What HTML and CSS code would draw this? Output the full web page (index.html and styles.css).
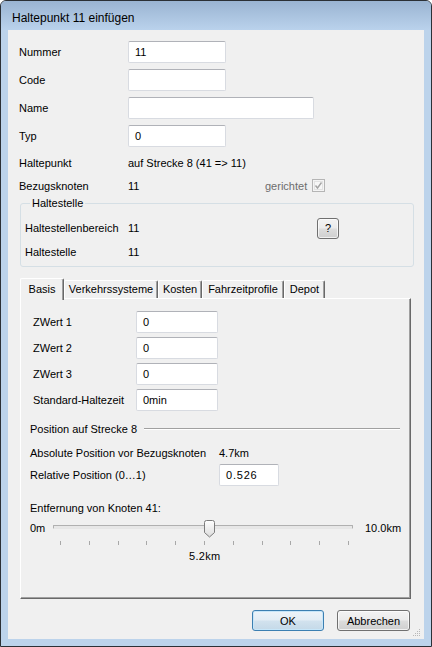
FILE: index.html
```html
<!DOCTYPE html>
<html lang="de">
<head>
<meta charset="utf-8">
<title>Haltepunkt 11 einfügen</title>
<link rel="stylesheet" href="styles.css">
</head>
<body>
<div class="window">
  <div class="titlebar"><span class="title">Haltepunkt 11 einfügen</span></div>
  <div class="client">
    <div class="row in"><span class="lbl">Nummer</span><div class="input w98">11</div></div>
    <div class="row in"><span class="lbl">Code</span><div class="input w98"></div></div>
    <div class="row in"><span class="lbl">Name</span><div class="input w186"></div></div>
    <div class="row in typ"><span class="lbl">Typ</span><div class="input w98">0</div></div>
    <div class="row txt"><span class="lbl">Haltepunkt</span><span>auf Strecke 8 (41 =&gt; 11)</span></div>
    <div class="row txt"><span class="lbl">Bezugsknoten</span><span class="val137">11</span><span class="disabled">gerichtet</span>
      <svg class="check" width="13" height="13" viewBox="0 0 13 13"><rect x="0.5" y="0.5" width="12" height="12" fill="#f4f4f4" stroke="#b5b5b5"/><rect x="2.5" y="2.5" width="8" height="8" fill="#f7f7f7" stroke="#e2e2e2"/><path d="M3.5 6.5 L5.5 9 L9.5 3.5" fill="none" stroke="#a4a4a4" stroke-width="1.4"/></svg>
    </div>
    <fieldset class="group">
      <legend>Haltestelle</legend>
      <div class="grow"><span class="glbl">Haltestellenbereich</span><span class="gval">11</span><div class="btn qbtn">?</div></div>
      <div class="grow"><span class="glbl">Haltestelle</span><span class="gval">11</span></div>
    </fieldset>
    <div class="tabs">
      <div class="tab sel t1">Basis</div>
      <div class="tab t2">Verkehrssysteme</div>
      <div class="tab t3">Kosten</div>
      <div class="tab t4">Fahrzeitprofile</div>
      <div class="tab t5">Depot</div>
    </div>
    <div class="panel">
      <div class="prow"><span class="plbl">ZWert 1</span><div class="input w82">0</div></div>
      <div class="prow"><span class="plbl">ZWert 2</span><div class="input w82">0</div></div>
      <div class="prow"><span class="plbl">ZWert 3</span><div class="input w82">0</div></div>
      <div class="prow"><span class="plbl">Standard-Haltezeit</span><div class="input w82">0min</div></div>
      <div class="section"><span>Position auf Strecke 8</span><div class="sepline"></div></div>
      <div class="srow abs"><span class="slbl">Absolute Position vor Bezugsknoten</span><span>4.7km</span></div>
      <div class="srow"><span class="slbl">Relative Position (0…1)</span><div class="input w60 num">0.526</div></div>
      <div class="srow ent"><span>Entfernung von Knoten 41:</span></div>
      <div class="slider">
        <span class="smin">0m</span>
        <div class="trackwrap">
          <div class="track"></div>
          <svg class="thumb" width="11" height="18" viewBox="0 0 11 18">
            <defs><linearGradient id="tg" x1="0" y1="0" x2="0" y2="1"><stop offset="0" stop-color="#ffffff"/><stop offset="1" stop-color="#dcdcdc"/></linearGradient></defs>
            <path d="M0.5 2.5 Q0.5 0.5 2.5 0.5 H8.5 Q10.5 0.5 10.5 2.5 V12.5 L5.5 17 L0.5 12.5 Z" fill="url(#tg)" stroke="#7c7c7c"/>
          </svg>
        </div>
        <span class="smax">10.0km</span>
      </div>
      <div class="ticks"></div>
      <div class="cur">5.2km</div>
    </div>
    <div class="buttons">
      <div class="btn default">OK</div>
      <div class="btn cancel">Abbrechen</div>
    </div>
    <svg class="grip" width="8" height="8" viewBox="0 0 8 8">
      <g fill="#b8b8b8"><rect x="6" y="0" width="1" height="1"/><rect x="4" y="2" width="1" height="1"/><rect x="6" y="2" width="1" height="1"/><rect x="2" y="4" width="1" height="1"/><rect x="4" y="4" width="1" height="1"/><rect x="6" y="4" width="1" height="1"/><rect x="0" y="6" width="1" height="1"/><rect x="2" y="6" width="1" height="1"/><rect x="4" y="6" width="1" height="1"/><rect x="6" y="6" width="1" height="1"/></g>
    </svg>
  </div>
</div>
</body>
</html>
```
FILE: styles.css
```css
* { box-sizing: border-box; }
html, body { margin: 0; padding: 0; }
body {
  width: 432px;
  height: 647px;
  overflow: hidden;
  background: #ffffff;
  font-family: "Liberation Sans", Arial, sans-serif;
  font-size: 11px;
  color: #000;
}
.window {
  width: 432px;
  height: 647px;
  border: 1px solid #2b3036;
  border-radius: 6px 6px 0 0;
  background: #bcd3eb;
  display: flex;
  flex-direction: column;
}
.titlebar {
  flex: none;
  height: 29px;
  border-radius: 5px 5px 0 0;
  background: linear-gradient(#9ab4d2, #bad2ec);
  display: flex;
  align-items: center;
  padding: 4px 0 0 11px;
}
.title { font-size: 12px; color: #000; }
.client {
  flex: 1;
  margin: 0 7px 7px 7px;
  background: #f0f0f0;
  position: relative;
  padding: 11px 0 0 11px;
  display: flex;
  flex-direction: column;
}
.row { display: flex; align-items: flex-start; flex: none; }
.row.in { height: 28px; }
.row.in.typ { height: 26px; }
.row.in .lbl { line-height: 22px; }
.row.txt { height: 23px; align-items: center; }
.lbl { width: 109px; flex: none; }
.input {
  height: 22px;
  background: #fff;
  border: 1px solid #d8dbe1;
  border-top-color: #b0b2b8;
  border-radius: 2px;
  padding: 0 6px;
  line-height: 20px;
  flex: none;
}
.w98 { width: 98px; }
.w186 { width: 186px; }
.w82 { width: 82px; }
.w60 { width: 60px; }
.num { letter-spacing: 0.8px; }
.val137 { width: 137px; flex: none; }
.disabled { color: #6d6d6d; }
.check { margin-left: 5px; flex: none; }

.group {
  flex: none;
  margin: -1px 0 0 1px;
  width: 394px;
  border: 1px solid #d5dfe5;
  border-radius: 3px;
  padding: 6px 0 2px 4px;
  min-width: 0;
}
.group legend {
  margin-left: 5px;
  padding: 0 2px;
  line-height: 14px;
}
.grow { display: flex; align-items: center; height: 24px; }
.glbl { width: 103px; flex: none; }
.gval { width: 189px; flex: none; }
.btn {
  height: 21px;
  border: 1px solid #707070;
  border-radius: 3px;
  background: linear-gradient(#f3f3f3 0%, #ebebeb 48%, #dddddd 52%, #cfcfcf 100%);
  display: flex;
  align-items: center;
  justify-content: center;
  flex: none;
  box-shadow: inset 0 0 0 1px rgba(255,255,255,0.7);
}
.qbtn { width: 22px; }

.tabs {
  flex: none;
  display: flex;
  align-items: flex-end;
  height: 20px;
  margin: 11px 0 0 1px;
  position: relative;
  z-index: 1;
}
.tab {
  height: 18px;
  background: #f0f0f0;
  border-top: 1px solid #ffffff;
  border-left: 1px solid #ffffff;
  border-right: 1px solid #696969;
  box-shadow: inset -1px 0 0 #a0a0a0;
  border-radius: 2px 2px 0 0;
  display: flex;
  align-items: center;
  justify-content: center;
  padding-bottom: 1px;
}
.tab.sel { height: 22px; margin-bottom: -2px; padding-bottom: 2px; }
.t1 { width: 44px; }
.t2 { width: 94px; }
.t3 { width: 44px; }
.t4 { width: 82px; }
.t5 { width: 41px; }

.panel {
  flex: none;
  margin-left: 1px;
  width: 391px;
  height: 301px;
  border-top: 1px solid #ffffff;
  border-left: 1px solid #ffffff;
  border-right: 1px solid #696969;
  border-bottom: 1px solid #696969;
  box-shadow: inset -1px -1px 0 #a0a0a0;
  padding-top: 12px;
  display: flex;
  flex-direction: column;
}
.prow { display: flex; align-items: flex-start; height: 26px; padding-left: 12px; flex: none; }
.plbl { width: 103px; flex: none; line-height: 22px; }
.section {
  display: flex;
  align-items: center;
  height: 18px;
  margin-top: 5px;
  padding: 0 10px 0 9px;
  flex: none;
}
.sepline {
  flex: 1;
  height: 2px;
  margin-left: 7px;
  border-top: 1px solid #a0a0a0;
  border-bottom: 1px solid #ffffff;
}
.srow { display: flex; align-items: center; height: 22px; padding-left: 9px; flex: none; }
.srow.abs { margin-top: 4px; }
.srow.ent { margin-top: 13px; height: 18px; }
.slbl { width: 189px; flex: none; }
.slider {
  display: flex;
  align-items: center;
  height: 22px;
  padding-left: 9px;
  flex: none;
}
.smin { width: 23px; flex: none; }
.trackwrap {
  width: 300px;
  height: 22px;
  position: relative;
  flex: none;
}
.track {
  position: absolute;
  left: 0;
  top: 8px;
  width: 300px;
  height: 4px;
  border: 1px solid #b0b0b0;
  border-bottom-color: #e6e6e6;
  background: #e7e7e7;
  border-radius: 1px;
}
.thumb { position: absolute; left: 151px; top: 3px; }
.smax { margin-left: 12px; }
.ticks {
  flex: none;
  margin: 2px 0 0 39px;
  width: 289px;
  height: 4px;
  background: repeating-linear-gradient(to right, #a8a8a8 0, #a8a8a8 1px, transparent 1px, transparent 28.8px);
}
.cur {
  flex: none;
  margin-top: 3px;
  height: 16px;
  line-height: 16px;
  padding-left: 168px;
  letter-spacing: 0.3px;
}
.buttons {
  flex: none;
  display: flex;
  justify-content: flex-end;
  gap: 13px;
  margin: 11px 14px 0 0;
}
.buttons .btn.default {
  width: 72px;
  border-color: #3c7fb1;
  background: linear-gradient(#edf4f9 0%, #e3edf5 48%, #d2e2ee 52%, #c4d9e8 100%);
  box-shadow: inset 0 0 0 1px #c7e6f9;
}
.buttons .btn.cancel { width: 73px; }
.grip { position: absolute; right: 3px; bottom: 2px; }
```
